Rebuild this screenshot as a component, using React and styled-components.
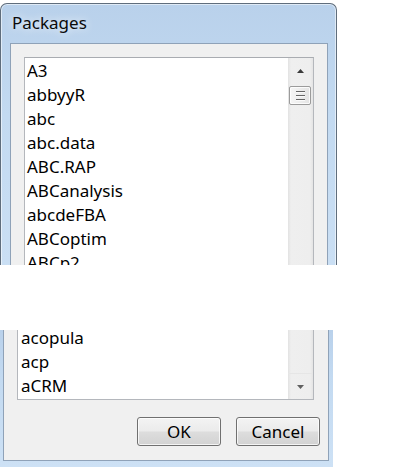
import React from "react";
import styled, { createGlobalStyle } from "styled-components";

const GlobalStyle = createGlobalStyle`
  body {
    margin: 0;
    background: #ffffff;
    font-family: "Noto Sans", "Open Sans", sans-serif;
  }
`;

const glass = "linear-gradient(180deg, #b9d1eb 0%, #c3daf1 35%, #cde1f5 100%)";

const Page = styled.div`
  width: 410px;
  height: 467px;
  display: flex;
  flex-direction: column;
  background: #ffffff;
`;

// one cropped piece of the dialog
const Shot = styled.div`
  height: ${(p) => p.$h}px;
  margin-top: ${(p) => p.$gap || 0}px;
  padding-top: ${(p) => p.$pad || 0}px;
  box-sizing: border-box;
  overflow: hidden;
  display: flex;
`;

const GlassFrame = styled.div`
  width: 337px;
  height: 320px;
  box-sizing: border-box;
  display: flex;
  flex-direction: column;
  padding: 0 8px 0 9px;
  border: 1px solid #5f6d7c;
  border-bottom: none;
  border-radius: 7px 7px 0 0;
  background: ${glass};
  box-shadow: inset 0 0 0 1px rgba(255, 255, 255, 0.55);
`;

const GlassStub = styled.div`
  width: 333px;
  box-sizing: border-box;
  display: flex;
  flex-direction: column;
  padding: 0 4px 6px 3px;
  background: ${glass};
`;

const TitleBar = styled.div`
  height: 39px;
  box-sizing: border-box;
  padding: 7px 0 0 2px;
  font-size: 17px;
  line-height: 24px;
  color: #0a0a0a;
  text-shadow: 0 0 8px rgba(255, 255, 255, 0.95);
`;

const Client = styled.div`
  flex: 1;
  display: flex;
  flex-direction: column;
  background: #f0f0f0;
  border: 1px solid #8fa2b8;
  border-${(p) => (p.$cutTop ? "top" : "bottom")}: none;
  padding: ${(p) => (p.$cutTop ? "0 8px 14px 13px" : "13px 13px 0 13px")};
`;

const ListBox = styled.div`
  width: ${(p) => p.$w}px;
  height: ${(p) => p.$h}px;
  box-sizing: border-box;
  display: flex;
  background: #ffffff;
  border: 1px solid #b4b7bc;
  border-top-color: ${(p) => (p.$cutTop ? "transparent" : "#a9acb1")};
  border-top-width: ${(p) => (p.$cutTop ? 0 : 1)}px;
  overflow: hidden;
`;

const Items = styled.div`
  flex: 1;
  display: flex;
  flex-direction: column;
  justify-content: ${(p) => (p.$fromEnd ? "flex-end" : "flex-start")};
  padding: ${(p) => (p.$fromEnd ? "0 0 1px 3px" : "1px 0 0 2px")};
  overflow: hidden;
`;

const Item = styled.div`
  flex: none;
  font-size: 17px;
  line-height: 24px;
  color: #000000;
  white-space: nowrap;
`;

const ScrollBar = styled.div`
  width: 25px;
  display: flex;
  flex-direction: column;
  justify-content: ${(p) => (p.$fromEnd ? "flex-end" : "flex-start")};
  background: linear-gradient(
    to right,
    #e2e2e2 0%,
    #efefef 12%,
    #eeeeee 88%,
    #e4e4e4 100%
  );
`;

const ArrowButton = styled.div`
  height: 25px;
  display: flex;
  align-items: center;
  justify-content: center;
  border-${(p) => (p.$down ? "top" : "bottom")}: 1px solid
    ${(p) => (p.$down ? "#e6e6e6" : "transparent")};
`;

const Thumb = styled.div`
  height: 19px;
  margin: 2px 2px 0 1px;
  box-sizing: border-box;
  display: flex;
  flex-direction: column;
  align-items: center;
  justify-content: center;
  gap: 2px;
  border: 1px solid #9b9b9b;
  border-radius: 2px;
  background: linear-gradient(to right, #f6f6f6, #e4e4e4);
  box-shadow: inset 0 0 0 1px rgba(255, 255, 255, 0.8);
`;

const Grip = styled.div`
  width: 9px;
  height: 0;
  border-top: 1px solid #666666;
  border-bottom: 1px solid #fafafa;
`;

const ButtonRow = styled.div`
  display: flex;
  justify-content: flex-end;
  gap: 15px;
  margin-top: 17px;
`;

const Button = styled.button`
  width: 84px;
  height: 29px;
  box-sizing: border-box;
  padding: 1px 0 0;
  border: 1px solid #707070;
  border-radius: 3px;
  background: linear-gradient(
    to bottom,
    #f3f3f3 0%,
    #ebebeb 48%,
    #dddddd 52%,
    #d2d2d2 100%
  );
  box-shadow: inset 0 0 0 1px rgba(255, 255, 255, 0.75);
  font-family: "Noto Sans", "Open Sans", sans-serif;
  font-size: 17px;
  line-height: 24px;
  color: #000000;
`;

const Arrow = ({ down }) => (
  <svg width="7" height="4" viewBox="0 0 7 4">
    {down ? (
      <path d="M0 0 L7 0 L3.5 4 Z" fill="#606060" />
    ) : (
      <path d="M0 4 L3.5 0 L7 4 Z" fill="#3a3a3a" />
    )}
  </svg>
);

const topPackages = [
  "A3",
  "abbyyR",
  "abc",
  "abc.data",
  "ABC.RAP",
  "ABCanalysis",
  "abcdeFBA",
  "ABCoptim",
  "ABCp2",
];

const bottomPackages = ["acopula", "acp", "aCRM"];

const App = () => (
  <Page>
    <GlobalStyle />
    <Shot $h={265} $pad={3}>
      <GlassFrame>
        <TitleBar>Packages</TitleBar>
        <Client>
          <ListBox $w={290} $h={260}>
            <Items>
              {topPackages.map((name) => (
                <Item key={name}>{name}</Item>
              ))}
            </Items>
            <ScrollBar>
              <ArrowButton>
                <Arrow />
              </ArrowButton>
              <Thumb>
                <Grip />
                <Grip />
                <Grip />
              </Thumb>
            </ScrollBar>
          </ListBox>
        </Client>
      </GlassFrame>
    </Shot>
    <Shot $h={137} $gap={65}>
      <GlassStub>
        <Client $cutTop>
          <ListBox $w={297} $h={70} $cutTop>
            <Items $fromEnd>
              {bottomPackages.map((name) => (
                <Item key={name}>{name}</Item>
              ))}
            </Items>
            <ScrollBar $fromEnd>
              <ArrowButton $down>
                <Arrow down />
              </ArrowButton>
            </ScrollBar>
          </ListBox>
          <ButtonRow>
            <Button>OK</Button>
            <Button>Cancel</Button>
          </ButtonRow>
        </Client>
      </GlassStub>
    </Shot>
  </Page>
);

export default App;
